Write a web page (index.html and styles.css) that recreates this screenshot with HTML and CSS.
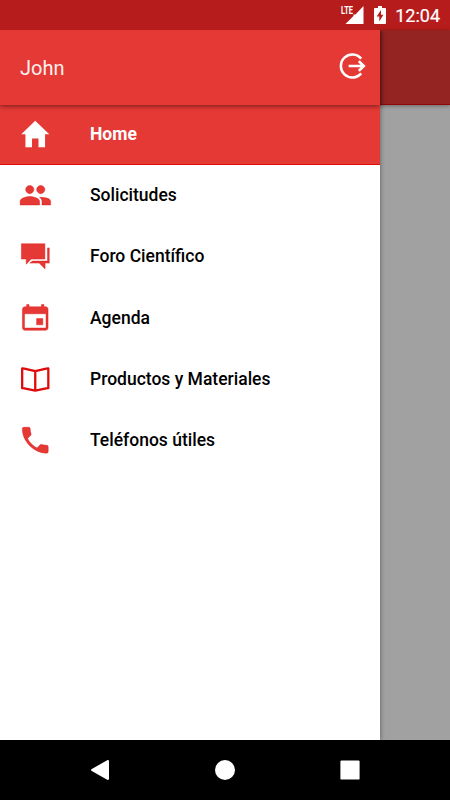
FILE: index.html
```
<!DOCTYPE html>
<html lang="es">

<head>
  <meta charset="UTF-8">
  <meta name="viewport" content="width=device-width, initial-scale=1.0">
  <title>Home</title>
  <link rel="stylesheet" href="styles.css">
</head>

<body>
  <header class="status-bar">
    <svg class="signal" viewBox="0 0 24 24">
      <text class="signal-label" x="0" y="10.5" textLength="12" lengthAdjust="spacingAndGlyphs">LTE</text>
      <path d="M22.5 3v18H4.5l8-8V11.5h2z" />
    </svg>
    <svg class="battery" viewBox="0 0 12 18">
      <path fill-rule="evenodd" d="M4 0h4v2h3q1 0 1 1v14q0 1-1 1H1q-1 0-1-1V3q0-1 1-1h3zM7 4L2.7 10.6H5.3V15.5L9.4 8.7H7z" />
    </svg>
    <span class="clock">12:04</span>
  </header>

  <main class="screen">
    <aside class="drawer">
      <div class="drawer-header">
        <span class="user-name">John</span>
        <button class="logout" aria-label="Salir">
          <svg viewBox="0 0 28 28">
            <path d="M22.2 6.6A11.5 11.5 0 1 0 22.2 21.4M9.6 14H24.5M19.8 9.1l5 4.9-5 4.9" />
          </svg>
        </button>
      </div>

      <nav class="menu">
        <a class="menu-item active" href="#">
          <svg class="menu-icon" viewBox="0 0 512 512">
            <path d="M208 448V320h96v128h97.6V256H464L256 56 48 256h62.4v192z" />
          </svg>
          Home
        </a>
        <a class="menu-item" href="#">
          <svg class="menu-icon" viewBox="0 0 512 512">
            <path d="M337.454 232c33.599 0 61.092-27.002 61.092-60 0-32.997-27.493-60-61.092-60s-61.09 27.003-61.09 60c0 32.998 27.491 60 61.09 60zm-162.908 0c33.599 0 61.09-27.002 61.09-60 0-32.997-27.491-60-61.09-60s-61.092 27.003-61.092 60c0 32.998 27.493 60 61.092 60zm0 44C126.688 276 32 298.998 32 346v54h288v-54c0-47.002-97.599-70-145.454-70zm162.908 11.003c-6.105 0-10.325 0-17.454.997 23.426 17.003 36 28 36 58v54h128v-54c0-47.002-98.691-58.997-146.546-58.997z" />
          </svg>
          Solicitudes
        </a>
        <a class="menu-item" href="#">
          <svg class="menu-icon" viewBox="0 0 512 512">
            <path d="M51 70h348v228H196l-74 76v-76H51zM438 132h26v226h-62v86l-88-86H176l40-30h222z" />
          </svg>
          Foro Científico
        </a>
        <a class="menu-item" href="#">
          <svg class="menu-icon" viewBox="0 0 512 512">
            <path d="M368 276h-92v92h92v-92zM348 68v32H164V68h-36v32h-24c-22 0-38 16-38 38v274c0 22 16 38 38 38h304c22 0 38-16 38-38V138c0-22-16-38-38-38h-24V68h-36zm68 348H96V204h320v212z" />
          </svg>
          Agenda
        </a>
        <a class="menu-item" href="#">
          <svg class="menu-icon outline" viewBox="0 0 512 512">
            <path d="M62 96l32 2 162 38 162-38 32-2v292l-32 2-162 34-162-34-32-2zM256 136v288" />
          </svg>
          Productos y Materiales
        </a>
        <a class="menu-item" href="#">
          <svg class="menu-icon" viewBox="0 0 512 512">
            <path d="M426.666 330.667a250.385 250.385 0 0 1-75.729-11.729c-7.469-2.136-16-1.073-21.332 5.333l-46.939 46.928c-60.802-30.928-109.864-80-140.802-140.803l46.939-46.927c5.332-5.333 7.462-13.864 5.332-21.333-8.537-24.531-12.802-50.136-12.802-76.803C181.333 73.604 171.734 64 160 64H85.333C73.599 64 64 73.604 64 85.333 64 274.656 237.344 448 426.666 448 438.4 448 448 438.4 448 426.667V352c0-11.729-9.6-21.333-21.334-21.333z" />
          </svg>
          Teléfonos útiles
        </a>
      </nav>
    </aside>

    <div class="page">
      <div class="page-toolbar"></div>
    </div>
  </main>

  <footer class="nav-bar">
    <svg viewBox="0 0 20 20"><path d="M17.2.2Q19 -.4 19 1.2V18.8Q19 20.4 17.2 19.8L1.8 11Q.2 10 1.8 9z" /></svg>
    <svg viewBox="0 0 20 20"><circle cx="10" cy="10" r="10" /></svg>
    <svg viewBox="0 0 20 20"><rect x=".4" y=".4" width="19.2" height="19.2" rx="1.2" /></svg>
  </footer>
</body>

</html>
```
FILE: styles.css
```
:root {
  --primary: #e53935;
  --primary-dark: #b71c1c;
  --accent: #df0a0a;
  --toolbar-dim: #932422;
  --page-dim: #a1a1a1;
}

* {
  box-sizing: border-box;
  margin: 0;
  padding: 0;
}

body {
  display: flex;
  flex-direction: column;
  height: 100vh;
  font-family: Roboto, sans-serif;
  background: #fff;
  overflow: hidden;
}

/* Status bar */
.status-bar {
  display: flex;
  align-items: center;
  justify-content: flex-end;
  height: 30px;
  padding-right: 10px;
  background: var(--primary-dark);
  color: #fff;
}

.status-bar svg {
  fill: #fff;
}

.signal {
  width: 24px;
  height: 24px;
  margin-right: 9px;
}

.signal-label {
  font-size: 10px;
  font-weight: 700;
}

.battery {
  width: 12px;
  height: 18px;
  margin-right: 9px;
}

.clock {
  font-size: 18px;
  line-height: 30px;
  padding-top: 1px;
  -webkit-text-stroke: 0.2px #fff;
}

.screen {
  display: flex;
  flex: 1;
}

/* Drawer */
.drawer {
  position: relative;
  z-index: 1;
  width: 380px;
  background: #fff;
  box-shadow: 0 0 5px rgba(0, 0, 0, 0.45);
  clip-path: inset(0 -12px 0 0);
}

.drawer-header {
  position: relative;
  display: flex;
  align-items: center;
  justify-content: space-between;
  height: 75px;
  padding: 0 13px 0 20px;
  background: var(--primary);
  color: #fff;
  box-shadow: 0 1px 5px rgba(0, 0, 0, 0.5);
}

.user-name {
  font-size: 20px;
  opacity: 0.93;
}

.logout {
  width: 28px;
  height: 28px;
  margin-top: -4px;
  border: none;
  background: none;
}

.logout svg {
  display: block;
  fill: none;
  stroke: #fff;
  stroke-width: 2.6;
}

.menu-item {
  display: flex;
  align-items: center;
  gap: 38px;
  height: 61.3px;
  padding: 0 17.5px 1.4px;
  color: #000;
  font-size: 17.5px;
  font-weight: 500;
  text-decoration: none;
}

.menu-item.active {
  height: 60px;
  padding-bottom: 1px;
  background: var(--primary);
  border-bottom: 1px solid var(--accent);
  color: #fff;
  font-weight: 700;
}

.menu-icon {
  width: 34.5px;
  height: 34.5px;
  fill: var(--primary);
  stroke: var(--accent);
  stroke-width: 6;
}

.active .menu-icon {
  fill: #fff;
  stroke: none;
}

.menu-icon.outline {
  fill: none;
  stroke-width: 34;
  stroke-linejoin: round;
}

/* Dimmed page behind the drawer */
.page {
  flex: 1;
  background: var(--page-dim);
}

.page-toolbar {
  height: 75px;
  background: var(--toolbar-dim);
  border-bottom: 1px solid #910606;
  box-shadow: 0 1px 4px rgba(0, 0, 0, 0.35);
}

/* Android navigation */
.nav-bar {
  display: flex;
  align-items: center;
  justify-content: space-between;
  height: 60px;
  padding: 0 90px;
  background: #000;
}

.nav-bar svg {
  width: 20px;
  height: 20px;
  fill: #fff;
}
```
